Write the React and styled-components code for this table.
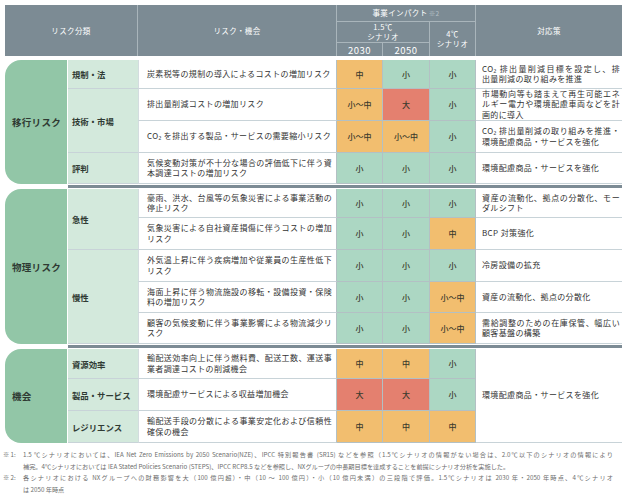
import React from 'react'
import styled, { createGlobalStyle } from 'styled-components'

const GlobalStyle = createGlobalStyle`
  html, body {
    margin: 0;
    padding: 0;
    background: #fff;
  }
  body {
    font-family: "Noto Sans CJK JP", "Noto Sans", sans-serif;
    color: #333;
  }
`

const COLS = '199px 46px 47px 46px 146px'

const LEVEL = {
  '小': '#acd7c3',
  '中': '#f2be6f',
  '小～中': '#f2be6f',
  '大': '#e4806f',
}

const Page = styled.div`
  width: 624px;
  box-sizing: border-box;
  padding: 5px 2px 0 5px;
`

const Head = styled.div`
  display: grid;
  grid-template-columns: 133px ${COLS};
  grid-template-rows: 17px 21px 13px;
  background: #7c8b94;
  color: #fff;
  margin-bottom: 4px;
`

const HeadCell = styled.div`
  grid-column: ${p => p.$col};
  grid-row: ${p => p.$row};
  display: flex;
  flex-direction: column;
  align-items: center;
  justify-content: center;
  text-align: center;
  font-size: ${p => (p.$big ? '9.5px' : '7.5px')};
  letter-spacing: ${p => (p.$big ? '0.5px' : '0.4px')};
  line-height: 10px;
  box-sizing: border-box;
  border-right: ${p => (p.$last ? 'none' : '1px solid #a9b5bb')};
  border-bottom: ${p => (p.$under ? '1px solid #a9b5bb' : 'none')};
`

const NoteMark = styled.span`
  color: #b6c1c7;
  font-size: 6.5px;
  margin-left: 1px;
`

const Group = styled.div`
  display: flex;
  gap: 1px;
`

const Category = styled.div`
  width: 62px;
  flex: none;
  box-sizing: border-box;
  background: #92c6a7;
  border-radius: 16px 0 0 16px;
  display: flex;
  align-items: center;
  padding-left: 7px;
  font-size: 9.5px;
  font-weight: 700;
  letter-spacing: 0.3px;
  color: #2f3a33;
`

const Rows = styled.div`
  flex: 1;
  display: grid;
  grid-template-columns: 70px ${COLS};
  grid-template-rows: ${p => p.$rows};
`

const Cell = styled.div`
  grid-row: ${p => p.$row};
  box-sizing: border-box;
  display: flex;
  flex-direction: column;
  justify-content: center;
  border-bottom: 1px solid #c8d3d8;
  min-width: 0;
`

const Sub = styled(Cell)`
  grid-column: 1;
  background: #d3e9dc;
  padding-left: 4px;
  font-size: 8.4px;
  font-weight: 700;
  color: #2f3a33;
`

const Risk = styled(Cell)`
  grid-column: 2;
  padding: 0 4px 0 8px;
  font-size: 8px;
  letter-spacing: 0.36px;
  line-height: 10.5px;
  border-left: 1px solid #d3dcdf;
  border-right: 1px solid #b3c0c4;
`

const Impact = styled(Cell)`
  grid-column: ${p => p.$col};
  align-items: center;
  background: ${p => LEVEL[p.$level]};
  border-right: 1px solid #b3c0c4;
  border-bottom-color: #b3c0c4;
  font-size: 8px;
  font-weight: 500;
  color: #3a3a2c;
`

const Resp = styled(Cell)`
  grid-column: 6;
  padding: 0 2px 0 6px;
  font-size: 8px;
  letter-spacing: 0.36px;
  line-height: 10.5px;
`

const Line = styled.span`
  display: block;
  white-space: nowrap;
  text-align-last: ${p => (p.$fill ? 'justify' : 'auto')};
`

const Divider = styled.div`
  height: 3px;
  margin: 1px 0 1px 63px;
  background: #7c8b94;
`

const Notes = styled.div`
  margin: 6px 0 0 -2px;
  font-size: 6.2px;
  line-height: 11.7px;
  color: #6d6d6d;
`

const Note = styled.div`
  display: flex;
`

const Mark = styled.span`
  width: 20px;
  flex: none;
  white-space: nowrap;
`

const NoteText = styled.div`
  flex: 1;
  min-width: 0;
  padding-right: 9px;
`

const groups = [
  {
    name: '移行リスク',
    rows: [29, 32, 32, 31],
    subs: [
      {
        name: '規制・法',
        items: [
          {
            risk: ['炭素税等の規制の導入によるコストの増加リスク'],
            impact: ['中', '小', '小'],
            resp: ['CO₂ 排出量削減目標を設定し、排', '出量削減の取り組みを推進'],
          },
        ],
      },
      {
        name: '技術・市場',
        items: [
          {
            risk: ['排出量削減コストの増加リスク'],
            impact: ['小～中', '大', '小'],
            resp: ['市場動向等も踏まえて再生可能エネ', 'ルギー電力や環境配慮車両などを計', '画的に導入'],
          },
          {
            risk: ['CO₂ を排出する製品・サービスの需要縮小リスク'],
            impact: ['小～中', '小～中', '小'],
            resp: ['CO₂ 排出量削減の取り組みを推進・', '環境配慮商品・サービスを強化'],
          },
        ],
      },
      {
        name: '評判',
        items: [
          {
            risk: ['気候変動対策が不十分な場合の評価低下に伴う資', '本調達コストの増加リスク'],
            impact: ['小', '小', '小'],
            resp: ['環境配慮商品・サービスを強化'],
          },
        ],
      },
    ],
  },
  {
    name: '物理リスク',
    rows: [29, 32, 32, 31, 31],
    subs: [
      {
        name: '急性',
        items: [
          {
            risk: ['豪雨、洪水、台風等の気象災害による事業活動の', '停止リスク'],
            impact: ['小', '小', '小'],
            resp: ['資産の流動化、拠点の分散化、モー', 'ダルシフト'],
          },
          {
            risk: ['気象災害による自社資産損傷に伴うコストの増加', 'リスク'],
            impact: ['小', '小', '中'],
            resp: ['BCP 対策強化'],
          },
        ],
      },
      {
        name: '慢性',
        items: [
          {
            risk: ['外気温上昇に伴う疾病増加や従業員の生産性低下', 'リスク'],
            impact: ['小', '小', '小'],
            resp: ['冷房設備の拡充'],
          },
          {
            risk: ['海面上昇に伴う物流施設の移転・設備投資・保険', '料の増加リスク'],
            impact: ['小', '小', '小～中'],
            resp: ['資産の流動化、拠点の分散化'],
          },
          {
            risk: ['顧客の気候変動に伴う事業影響による物流減少リ', 'スク'],
            impact: ['小', '小', '小～中'],
            resp: ['需給調整のための在庫保管、幅広い', '顧客基盤の構築'],
          },
        ],
      },
    ],
  },
  {
    name: '機会',
    rows: [30, 32, 32],
    resp: ['環境配慮商品・サービスを強化'],
    subs: [
      {
        name: '資源効率',
        items: [
          {
            risk: ['輸配送効率向上に伴う燃料費、配送工数、運送事', '業者調達コストの削減機会'],
            impact: ['中', '中', '小'],
          },
        ],
      },
      {
        name: '製品・サービス',
        items: [
          {
            risk: ['環境配慮サービスによる収益増加機会'],
            impact: ['大', '大', '小'],
          },
        ],
      },
      {
        name: 'レジリエンス',
        items: [
          {
            risk: ['輸配送手段の分散による事業安定化および信頼性', '確保の機会'],
            impact: ['中', '中', '中'],
          },
        ],
      },
    ],
  },
]

const notes = [
  {
    mark: '※ 1:',
    lines: [
      '1.5 ℃シナリオにおいては、IEA Net Zero Emissions by 2050 Scenario(NZE)、IPCC 特別報告書 (SR15) などを参照（1.5℃シナリオの情報がない場合は、2.0℃以下のシナリオの情報により',
      '補完。4℃シナリオにおいては IEA Stated Policies Scenario (STEPS)、IPCC RCP8.5 などを参照し、NXグループの中長期目標を達成することを前提にシナリオ分析を実施した。',
    ],
  },
  {
    mark: '※ 2:',
    lines: [
      '各シナリオにおける NXグループへの財務影響を大（100 億円超）・中（10 ～ 100 億円）・小（10 億円未満）の三段階で評価。1.5℃シナリオは 2030 年・2050 年時点、4℃シナリオ',
      'は 2050 年時点',
    ],
  },
]

const Text = ({ lines }) =>
  lines.map((l, i) => (
    <Line key={i} $fill={i < lines.length - 1}>
      {l}
    </Line>
  ))

const GroupBlock = ({ group }) => {
  const cells = []
  let row = 1
  group.subs.forEach((sub, si) => {
    const start = row
    sub.items.forEach((item, ii) => {
      const r = row
      cells.push(
        <Risk key={`r${si}-${ii}`} $row={r}>
          <Text lines={item.risk} />
        </Risk>
      )
      item.impact.forEach((lv, k) =>
        cells.push(
          <Impact key={`i${si}-${ii}-${k}`} $row={r} $col={3 + k} $level={lv}>
            {lv}
          </Impact>
        )
      )
      if (item.resp) {
        cells.push(
          <Resp key={`p${si}-${ii}`} $row={r}>
            <Text lines={item.resp} />
          </Resp>
        )
      }
      row++
    })
    cells.push(
      <Sub key={`s${si}`} $row={`${start} / span ${sub.items.length}`}>
        {sub.name}
      </Sub>
    )
  })
  if (group.resp) {
    cells.push(
      <Resp key="shared" $row={`1 / span ${row - 1}`}>
        <Text lines={group.resp} />
      </Resp>
    )
  }
  return (
    <Group>
      <Category>{group.name}</Category>
      <Rows $rows={group.rows.map(h => `${h}px`).join(' ')}>{cells}</Rows>
    </Group>
  )
}

const App = () => (
  <Page>
    <GlobalStyle />
    <Head>
      <HeadCell $col="1" $row="1 / span 3">リスク分類</HeadCell>
      <HeadCell $col="2" $row="1 / span 3">リスク・機会</HeadCell>
      <HeadCell $col="3 / span 3" $row="1" $under>
        <span>
          事業インパクト<NoteMark>※2</NoteMark>
        </span>
      </HeadCell>
      <HeadCell $col="3 / span 2" $row="2" $under>
        <span>1.5℃</span>
        <span>シナリオ</span>
      </HeadCell>
      <HeadCell $col="5" $row="2 / span 2">
        <span>4℃</span>
        <span>シナリオ</span>
      </HeadCell>
      <HeadCell $col="3" $row="3" $big>2030</HeadCell>
      <HeadCell $col="4" $row="3" $big>2050</HeadCell>
      <HeadCell $col="6" $row="1 / span 3" $last>対応策</HeadCell>
    </Head>

    {groups.map((g, i) => (
      <React.Fragment key={g.name}>
        {i > 0 && <Divider />}
        <GroupBlock group={g} />
      </React.Fragment>
    ))}

    <Notes>
      {notes.map(n => (
        <Note key={n.mark}>
          <Mark>{n.mark}</Mark>
          <NoteText>
            <Text lines={n.lines} />
          </NoteText>
        </Note>
      ))}
    </Notes>
  </Page>
)

export default App
